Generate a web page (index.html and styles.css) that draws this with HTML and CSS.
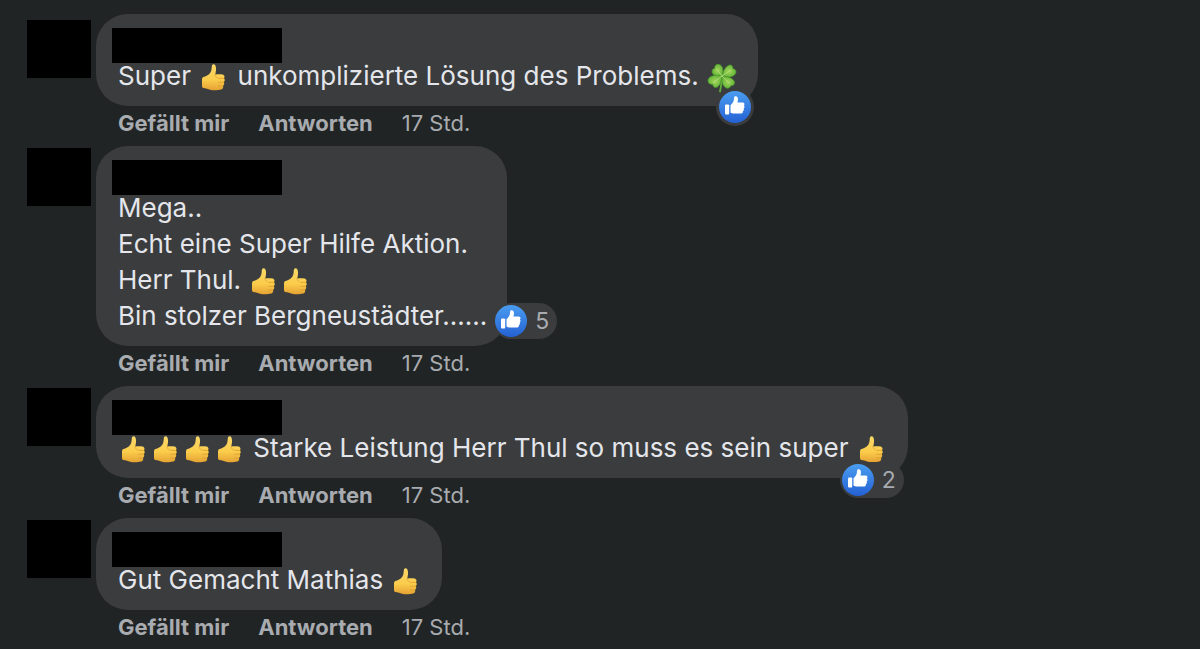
FILE: index.html
```html
<!DOCTYPE html>
<html lang="de">
<head>
  <meta charset="UTF-8" />
  <meta name="viewport" content="width=device-width, initial-scale=1.0">
  <title>Kommentare</title>
  <link rel="stylesheet" href="styles.css">
</head>
<body>
  <!-- Shared icons -->
  <svg class="sprite" aria-hidden="true">
    <defs>
      <linearGradient id="thumb-fill" x1="0" y1="0" x2="0" y2="1">
        <stop offset="0" stop-color="#fbd968" />
        <stop offset="0.6" stop-color="#fbcc4c" />
        <stop offset="1" stop-color="#e5a233" />
      </linearGradient>
      <linearGradient id="like-fill" x1="0" y1="0" x2="0" y2="1">
        <stop offset="0" stop-color="#4a9df0" />
        <stop offset="1" stop-color="#2461d4" />
      </linearGradient>
      <radialGradient id="leaf-fill">
        <stop offset="0" stop-color="#a3d65c" />
        <stop offset="1" stop-color="#68b53a" />
      </radialGradient>
    </defs>
    <symbol id="thumb" viewBox="0 0 32 32">
      <path fill="url(#thumb-fill)" d="M4 18.500C4 16.700 4.800 16 6.500 15.700C9.500 15 12.500 12.500 13.300 9.500C13.800 7.500 13.600 5.200 14.200 4C15 2.700 17 3.200 17.700 5.200C18.500 8 17.800 11 17.200 13.600C19.500 13.100 22.500 13.100 24.500 13.500C26.800 14 26.900 16.400 25.900 17.300C27.200 18.200 27 20.400 25.700 21.100C26.700 22.200 26.300 24.200 25 24.900C25.600 26.300 24.800 28 23.300 28.500C20.500 29.300 16 29.400 13 29C10.500 28.700 8.800 27.600 6.700 27.300C5 27.100 4 26.600 4 25Z" />
      <path fill="none" stroke="#d99a2c" stroke-width="0.7" stroke-linecap="round" d="M20.500 17.400H25.800M20.600 21.200H25.600M20.500 25H24.900M17.200 13.600C16.700 15 17.600 16 19.200 16.400" />
    </symbol>
    <symbol id="clover" viewBox="0 0 32 32">
      <path fill="none" stroke="#5fae38" stroke-width="1.800" stroke-linecap="round" d="M16 15C15.200 20 15.500 25 14 30.500" />
      <g fill="url(#leaf-fill)" stroke="#459a2a" stroke-width="0.7">
        <path d="M16 15C12 15.500 7 14.500 6.200 11.500C5.600 9 7 7.500 8.800 7.600C8.300 5 10 3 12.500 3.300C17 4 18 10 16 15Z" />
        <path d="M16 15C17 10.500 19.500 5.500 23 4.200C25.800 3.400 27.300 5.500 26.800 7.800C29.500 8 31 10.500 29.300 13C27 16.500 21 16.800 16 15Z" />
        <path d="M16 15C21 15.500 27 17 28.300 20.300C29.200 23 27.500 25 25 24.600C24 27.500 20.800 28 18.700 26C16 23.500 15.500 19 16 15Z" />
        <path d="M16 15C15.500 19 14.500 24 11.500 26C9 27.400 6.800 26 6.700 23.300C4 23.800 1.600 22 2 19.300C2.800 14.500 10 13.500 16 15Z" />
      </g>
      <path fill="none" stroke="#c2e486" stroke-width="0.7" stroke-linecap="round" d="M16 15L11 8.500M16 15L24.500 9.500M16 15L23 22M16 15L7.500 21.500" />
    </symbol>
    <symbol id="like" viewBox="0 0 32 32">
      <circle cx="16" cy="16" r="16" fill="url(#like-fill)" />
      <rect x="6" y="13.500" width="4.200" height="10" rx="1" fill="#fff" />
      <path fill="#fff" d="M11.500 14.200C13.500 12.500 15 10.500 15 7.500C15 5.400 16 5 17 5.300C19.400 6 19.300 9 18.400 11.500H23.500C25.600 11.500 26 13.600 24.900 14.500C25.900 15.400 25.600 17 24.600 17.400C25.300 18.500 24.800 19.800 23.800 20.200C24.200 21.600 23.300 22.600 21.500 22.600H15.500C13.500 22.600 12.500 22 11.500 21.500Z" />
    </symbol>
  </svg>

  <main class="comments">
    <article class="comment">
      <div class="avatar"></div>
      <div class="comment-body">
        <div class="bubble">
          <div class="name"></div>
          <p class="text">Super <svg class="emoji" role="img" aria-label="Daumen hoch"><use href="#thumb" /></svg> unkomplizierte Lösung des Problems. <svg class="emoji" role="img" aria-label="Kleeblatt"><use href="#clover" /></svg></p>
          <div class="reactions single"><svg class="like-icon"><use href="#like" /></svg></div>
        </div>
        <div class="actions">
          <button type="button">Gefällt mir</button>
          <button type="button">Antworten</button>
          <a href="#">17 Std.</a>
        </div>
      </div>
    </article>

    <article class="comment">
      <div class="avatar"></div>
      <div class="comment-body">
        <div class="bubble">
          <div class="name"></div>
          <p class="text">Mega..<br>Echt eine Super Hilfe Aktion.<br>Herr Thul. <svg class="emoji" role="img" aria-label="Daumen hoch"><use href="#thumb" /></svg><svg class="emoji" role="img" aria-label="Daumen hoch"><use href="#thumb" /></svg><br>Bin stolzer Bergneustädter......</p>
          <div class="reactions beside"><svg class="like-icon"><use href="#like" /></svg><span>5</span></div>
        </div>
        <div class="actions">
          <button type="button">Gefällt mir</button>
          <button type="button">Antworten</button>
          <a href="#">17 Std.</a>
        </div>
      </div>
    </article>

    <article class="comment">
      <div class="avatar"></div>
      <div class="comment-body">
        <div class="bubble">
          <div class="name"></div>
          <p class="text"><svg class="emoji" role="img" aria-label="Daumen hoch"><use href="#thumb" /></svg><svg class="emoji" role="img" aria-label="Daumen hoch"><use href="#thumb" /></svg><svg class="emoji" role="img" aria-label="Daumen hoch"><use href="#thumb" /></svg><svg class="emoji" role="img" aria-label="Daumen hoch"><use href="#thumb" /></svg> Starke Leistung Herr Thul so muss es sein super <svg class="emoji" role="img" aria-label="Daumen hoch"><use href="#thumb" /></svg></p>
          <div class="reactions"><svg class="like-icon"><use href="#like" /></svg><span>2</span></div>
        </div>
        <div class="actions">
          <button type="button">Gefällt mir</button>
          <button type="button">Antworten</button>
          <a href="#">17 Std.</a>
        </div>
      </div>
    </article>

    <article class="comment">
      <div class="avatar"></div>
      <div class="comment-body">
        <div class="bubble">
          <div class="name"></div>
          <p class="text">Gut Gemacht Mathias <svg class="emoji" role="img" aria-label="Daumen hoch"><use href="#thumb" /></svg></p>
        </div>
        <div class="actions">
          <button type="button">Gefällt mir</button>
          <button type="button">Antworten</button>
          <a href="#">17 Std.</a>
        </div>
      </div>
    </article>
  </main>
</body>
</html>
```
FILE: styles.css
```css
* {
  margin: 0;
  padding: 0;
  box-sizing: border-box;
}

body {
  font-family: Inter, "Liberation Sans", sans-serif;
  background: #212425;
  color: #e4e6eb;
}

.sprite {
  position: absolute;
  width: 0;
  height: 0;
}

.comments {
  padding: 14px 27px 0;
}

.comment {
  display: flex;
  align-items: flex-start;
  gap: 5px;
}

.avatar {
  flex: none;
  width: 64px;
  height: 58px;
  margin-top: 2px;
  background: #000;
}

.comment:first-child .avatar {
  margin-top: 6px;
}

.bubble {
  position: relative;
  width: fit-content;
  padding: 14px 20px 12px 22px;
  border-radius: 32px;
  background: #3a3c3d;
}

/* Blacked-out name, reaches slightly into the first text line */
.name {
  width: 170px;
  height: 35px;
  margin: 0 0 -5px -6px;
  background: #000;
}

.text {
  position: relative;
  font-size: 26px;
  line-height: 36px;
}

.emoji {
  width: 32px;
  height: 32px;
  vertical-align: -8px;
}

.reactions {
  position: absolute;
  right: 4px;
  bottom: -20px;
  display: flex;
  align-items: center;
  gap: 8px;
  height: 36px;
  padding: 0 8px 0 2px;
  border-radius: 18px;
  background: #3a3c3d;
  color: #a8abaf;
  font-size: 23px;
}

.reactions.single {
  height: 38px;
  padding: 0 3px;
  border-radius: 50%;
}

.reactions.beside {
  right: -50px;
  bottom: 7px;
}

.like-icon {
  width: 32px;
  height: 32px;
}

.actions {
  display: flex;
  gap: 29px;
  height: 40px;
  padding: 4px 22px 0;
  font-size: 22px;
  line-height: 26px;
}

.actions button {
  height: 26px;
  border: none;
  background: none;
  color: #a8abaf;
  font: inherit;
  font-weight: 700;
  cursor: pointer;
}

.actions a {
  color: #a8abaf;
  text-decoration: none;
}

.actions button:hover,
.actions a:hover {
  text-decoration: underline;
}
```
